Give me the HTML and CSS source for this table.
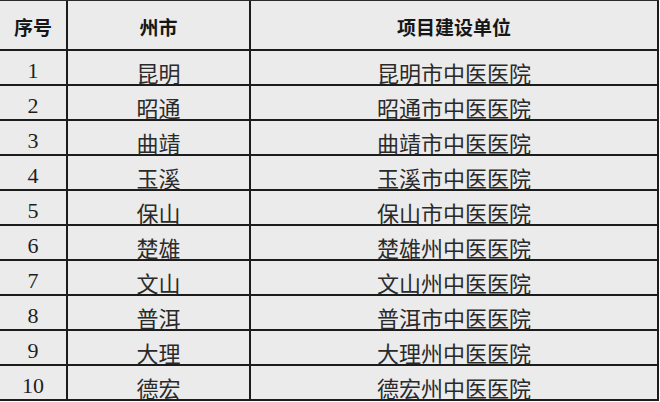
FILE: index.html
```html
<!DOCTYPE html>
<html lang="zh-CN">
<head>
<meta charset="utf-8">
<title>项目建设单位</title>
<link rel="stylesheet" href="styles.css">
</head>
<body>
<table class="units">
  <colgroup>
    <col class="c-num">
    <col class="c-city">
    <col class="c-unit">
  </colgroup>
  <thead>
    <tr><th>序号</th><th>州市</th><th>项目建设单位</th></tr>
  </thead>
  <tbody>
    <tr><td class="num">1</td><td>昆明</td><td>昆明市中医医院</td></tr>
    <tr><td class="num">2</td><td>昭通</td><td>昭通市中医医院</td></tr>
    <tr><td class="num">3</td><td>曲靖</td><td>曲靖市中医医院</td></tr>
    <tr><td class="num">4</td><td>玉溪</td><td>玉溪市中医医院</td></tr>
    <tr><td class="num">5</td><td>保山</td><td>保山市中医医院</td></tr>
    <tr><td class="num">6</td><td>楚雄</td><td>楚雄州中医医院</td></tr>
    <tr><td class="num">7</td><td>文山</td><td>文山州中医医院</td></tr>
    <tr><td class="num">8</td><td>普洱</td><td>普洱市中医医院</td></tr>
    <tr><td class="num">9</td><td>大理</td><td>大理州中医医院</td></tr>
    <tr><td class="num">10</td><td>德宏</td><td>德宏州中医医院</td></tr>
  </tbody>
</table>
</body>
</html>
```

FILE: styles.css
```css
html, body {
  margin: 0;
  padding: 0;
  background: #ffffff;
}

.units {
  table-layout: fixed;
  width: 659px;
  border-collapse: separate;
  border-spacing: 0;
  border-top: 1px solid #2a2a2a;
  background: #ebebeb;
  font-family: "Noto Sans CJK SC", sans-serif;
}

.c-num { width: 68px; }
.c-city { width: 183px; }
.c-unit { width: 408px; }

.units th,
.units td {
  box-sizing: border-box;
  border-right: 2px solid #1c1c1c;
  border-bottom: 2px solid #1c1c1c;
  text-align: center;
  vertical-align: top;
  padding: 0;
  white-space: nowrap;
}

.units th {
  height: 50px;
  padding-top: 16px;
  font-size: 19px;
  line-height: 19px;
  font-weight: 700;
  color: #161616;
}

.units td {
  height: 35px;
  padding-top: 10px;
  font-size: 22px;
  line-height: 22px;
  font-weight: 400;
  color: #2a2a2a;
}

.units td.num {
  padding-top: 9px;
  font-family: "Liberation Serif", serif;
  font-size: 22px;
  color: #1e1e1e;
}
```
